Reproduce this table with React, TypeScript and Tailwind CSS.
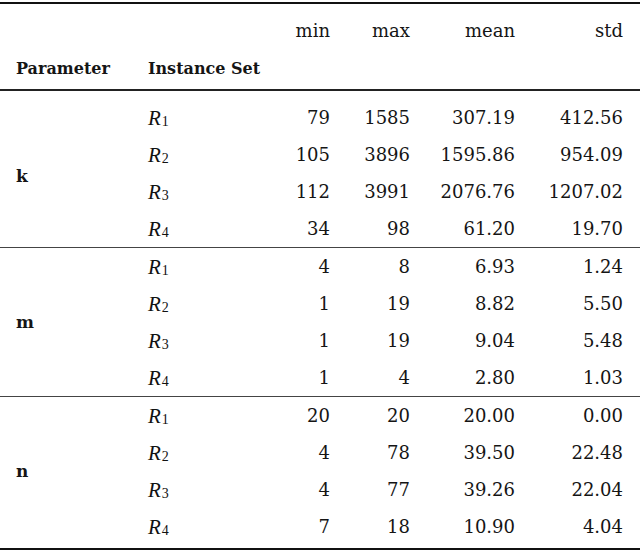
import React from "react";

type Row = [string, string, string, string, string];

const sections: { label: string; rows: Row[]; pt: string; labelPad: string }[] = [
  {
    label: "k",
    pt: "pt-[8px]",
    labelPad: "pt-[6px]",
    rows: [
      ["1", "79", "1585", "307.19", "412.56"],
      ["2", "105", "3896", "1595.86", "954.09"],
      ["3", "112", "3991", "2076.76", "1207.02"],
      ["4", "34", "98", "61.20", "19.70"],
    ],
  },
  {
    label: "m",
    pt: "pt-0",
    labelPad: "pt-0",
    rows: [
      ["1", "4", "8", "6.93", "1.24"],
      ["2", "1", "19", "8.82", "5.50"],
      ["3", "1", "19", "9.04", "5.48"],
      ["4", "1", "4", "2.80", "1.03"],
    ],
  },
  {
    label: "n",
    pt: "pt-0",
    labelPad: "pt-0",
    rows: [
      ["1", "20", "20", "20.00", "0.00"],
      ["2", "4", "78", "39.50", "22.48"],
      ["3", "4", "77", "39.26", "22.04"],
      ["4", "7", "18", "10.90", "4.04"],
    ],
  },
];

const gridCols = "grid grid-cols-[148px_122px_60px_80px_105px_108px] pr-[17px]";
const serif = "font-['DejaVu_Serif',serif]";

function RSym({ n }: { n: string }) {
  return (
    <span className="font-['Liberation_Serif',serif] italic text-[21px] text-[#111] relative top-[1px]">
      R
      <sub className="not-italic text-[14px] relative top-[1px] ml-[1px]">{n}</sub>
    </span>
  );
}

export default function App() {
  return (
    <div className={`w-[640px] h-[551px] bg-white text-[#151515] ${serif} pt-[2px] overflow-hidden`}>
      <div className="h-[2px] bg-[#111]" />
      {/* header */}
      <div className="pt-[8px] pb-[3px]">
        <div className={`${gridCols} h-[37px] items-center text-[18px] leading-[37px]`}>
          <div />
          <div />
          <div className="text-right">min</div>
          <div className="text-right">max</div>
          <div className="text-right">mean</div>
          <div className="text-right">std</div>
        </div>
        <div className={`${gridCols} h-[37px] items-center text-[16px] font-bold leading-[37px]`}>
          <div className="pl-[16px] pt-[1px]">Parameter</div>
          <div className="col-span-2 pt-[1px]">Instance Set</div>
        </div>
      </div>
      <div className="h-[2px] bg-[#222]" />
      {sections.map((s, si) => (
        <React.Fragment key={s.label}>
          <div className={`${gridCols} ${s.pt} auto-rows-[37px] text-[18px] leading-[37px]`}>
            <div
              className={`row-span-4 col-start-1 row-start-1 flex items-center pl-[16px] font-bold text-[17px] ${s.labelPad}`}
            >
              {s.label}
            </div>
            {s.rows.map((r, ri) => (
              <React.Fragment key={ri}>
                <div className="col-start-2 flex items-center">
                  <RSym n={r[0]} />
                </div>
                <div className="text-right">{r[1]}</div>
                <div className="text-right">{r[2]}</div>
                <div className="text-right">{r[3]}</div>
                <div className="text-right">{r[4]}</div>
              </React.Fragment>
            ))}
          </div>
          {si < sections.length - 1 ? (
            <div className="h-px bg-[#444]" />
          ) : (
            <div className="pt-[3px]">
              <div className="h-[2px] bg-[#111]" />
            </div>
          )}
        </React.Fragment>
      ))}
    </div>
  );
}
